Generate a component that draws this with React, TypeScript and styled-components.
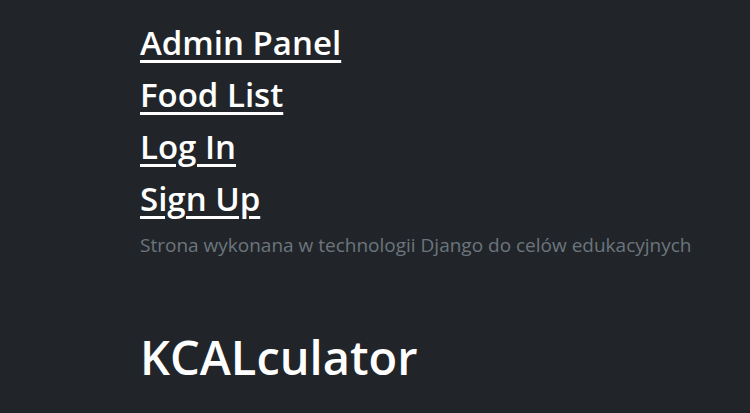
import styled, { createGlobalStyle } from "styled-components";

const GlobalStyle = createGlobalStyle`
  html, body {
    margin: 0;
    padding: 0;
    background: #212529;
  }
  body {
    font-family: "Open Sans", "Noto Sans", sans-serif;
    color: #ffffff;
  }
`;

const Page = styled.main`
  min-height: 413px;
  background: #212529;
  overflow: hidden;
`;

const Container = styled.div`
  max-width: 470px;
  margin: 0 auto;
  padding-top: 17px;
`;

const Nav = styled.nav`
  display: flex;
  flex-direction: column;
  align-items: flex-start;
`;

const NavLink = styled.a`
  font-size: 33px;
  font-weight: 600;
  line-height: 52px;
  color: #ffffff;
  text-decoration: underline;
  text-decoration-thickness: 3px;
  text-underline-offset: 5px;
`;

const Note = styled.p`
  margin: 7px 0 0;
  font-size: 19px;
  line-height: 26px;
  color: #6c757d;
  white-space: nowrap;
`;

const Title = styled.h1`
  margin: 71px 0 0;
  font-size: 47px;
  font-weight: 600;
  line-height: 1.2;
  color: #ffffff;
`;

const LINKS = ["Admin Panel", "Food List", "Log In", "Sign Up"];

const App = () => {
  return (
    <>
      <GlobalStyle />
      <Page>
        <Container>
          <Nav>
            {LINKS.map((label) => (
              <NavLink key={label} href="#">
                {label}
              </NavLink>
            ))}
          </Nav>
          <Note>Strona wykonana w technologii Django do celów edukacyjnych</Note>
          <Title>KCALculator</Title>
        </Container>
      </Page>
    </>
  );
};

export default App;
